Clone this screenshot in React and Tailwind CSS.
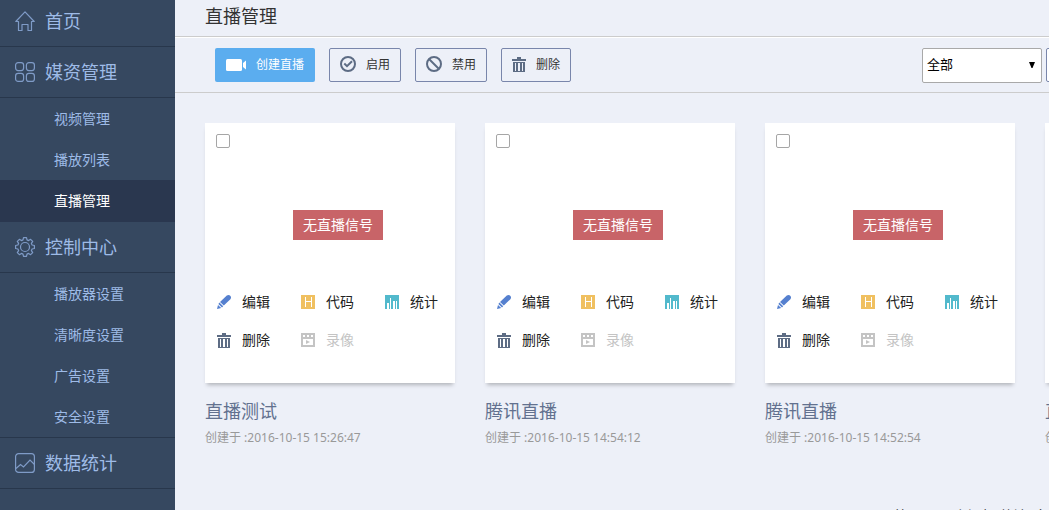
const SANS = "font-['Noto_Sans','Noto_Sans_CJK_SC',sans-serif]";

function HomeIcon() {
  return (
    <svg viewBox="0 0 20 20" className="size-5 shrink-0" fill="none" stroke="currentColor" strokeWidth="1.2" aria-hidden="true">
      <path d="M.8 10.500 10 .8l9.200 9.700H16.500v9h-3.500v-6H7v6H3.500v-9z" strokeLinejoin="round" />
    </svg>
  );
}

function GridIcon() {
  return (
    <svg viewBox="0 0 20 20" className="size-5 shrink-0" fill="none" stroke="currentColor" strokeWidth="1.2" aria-hidden="true">
      <rect x=".6" y=".6" width="8" height="8" rx="2.500" />
      <rect x="11.400" y=".6" width="8" height="8" rx="2.500" />
      <rect x=".6" y="11.400" width="8" height="8" rx="2.500" />
      <rect x="11.400" y="11.400" width="8" height="8" rx="2.500" />
    </svg>
  );
}

function GearIcon() {
  return (
    <svg viewBox="0 0 20 20" className="size-5 shrink-0" fill="none" stroke="currentColor" strokeWidth="1.2" strokeLinejoin="round" aria-hidden="true">
      <path d="M8.500.6h3l.5 2.300 1.600.7 2-1.300 2.100 2.100-1.300 2 .7 1.600 2.300.5v3l-2.300.5-.7 1.600 1.300 2-2.100 2.100-2-1.300-1.600.7-.5 2.300h-3L8 17.100l-1.600-.7-2 1.300-2.100-2.100 1.300-2L2.900 12 .6 11.500v-3L2.900 8l.7-1.600-1.300-2 2.100-2.100 2 1.300L8 2.900z" />
      <circle cx="10" cy="10" r="4.500" />
    </svg>
  );
}

function TrendIcon() {
  return (
    <svg viewBox="0 0 20 20" className="size-5 shrink-0" fill="none" stroke="currentColor" strokeWidth="1.2" aria-hidden="true">
      <rect x=".6" y=".6" width="18.800" height="18.800" rx="3" />
      <path d="m1 15.500 4.500-4 3 2.500 6.500-7 4.500 4.500" />
    </svg>
  );
}

function CameraIcon() {
  return (
    <svg viewBox="0 0 20 12" className="h-3 w-5 shrink-0" fill="currentColor" aria-hidden="true">
      <rect width="16" height="12" rx="1.500" />
      <path d="M17 4 20 1.500v9L17 8z" />
    </svg>
  );
}

function CheckIcon() {
  return (
    <svg viewBox="0 0 16 16" className="size-4 shrink-0" fill="none" stroke="currentColor" strokeWidth="2" aria-hidden="true">
      <circle cx="8" cy="8" r="7" />
      <path d="m4.300 7.500 2.700 2.700 5-5" />
    </svg>
  );
}

function BanIcon() {
  return (
    <svg viewBox="0 0 16 16" className="size-4 shrink-0" fill="none" stroke="currentColor" strokeWidth="2" aria-hidden="true">
      <circle cx="8" cy="8" r="7" />
      <path d="m3 3 10 10" />
    </svg>
  );
}

function TrashIcon() {
  return (
    <svg viewBox="0 0 14 15" className="h-[15px] w-3.5 shrink-0 text-[#5d6c84]" fill="currentColor" aria-hidden="true">
      <path fillRule="evenodd" d="M5 0h4v2h5v2H0V2h5zM1 5h12v10H1zM3 6v8h1V6zM6 6v8h2V6zM10 6v8h1V6z" />
    </svg>
  );
}

function PencilIcon() {
  return (
    <svg viewBox="0 0 14 14" className="size-3.5 shrink-0 text-[#5580cf]" fill="currentColor" aria-hidden="true">
      <path d="M9.800.6Q11-.2 12.500.2 14.200 1 14 3L13.400 4.200 6.800 10.600 3 7zM2.400 7.600 6.200 11.200 5 12.400 1.400 9zM1 10 4.200 13 0 14z" />
    </svg>
  );
}

function CodeIcon() {
  return (
    <svg viewBox="0 0 14 14" className="size-3.5 shrink-0" aria-hidden="true">
      <path fill="#f0c060" d="M0 0h14v14H0z" />
      <path fill="none" stroke="#fff" d="M4.500 2v10M10.500 2v10M4.500 6.500h6" />
    </svg>
  );
}

function StatsIcon() {
  return (
    <svg viewBox="0 0 14 14" className="size-3.5 shrink-0" aria-hidden="true">
      <path fill="#52b9cc" d="M0 0h14v14H0z" />
      <path fill="#fff" d="M2 8h2v6H2zM5 3h1v11H5zM8 6h2v8H8zM11 6h1v8h-1z" />
    </svg>
  );
}

function RecordIcon() {
  return (
    <svg viewBox="0 0 14 14" className="size-3.5 shrink-0" fill="#c4c4c4" aria-hidden="true">
      <path fillRule="evenodd" d="M0 0h14v14H0zM2 2v2h2V2zM6 2v2h2V2zM10 2v2h2V2zM2 6v6h10V6z" />
      <path d="M5 7v4l4-2z" />
    </svg>
  );
}

const MENU = [
  { label: "首页", Icon: HomeIcon, items: [] },
  { label: "媒资管理", Icon: GridIcon, items: ["视频管理", "播放列表", "直播管理"] },
  { label: "控制中心", Icon: GearIcon, items: ["播放器设置", "清晰度设置", "广告设置", "安全设置"] },
  { label: "数据统计", Icon: TrendIcon, items: [] },
];

const STREAMS = [
  { id: 1, title: "直播测试", created: "2016-10-15 15:26:47" },
  { id: 2, title: "腾讯直播", created: "2016-10-15 14:54:12" },
  { id: 3, title: "腾讯直播", created: "2016-10-15 14:52:54" },
  { id: 4, title: "直播测试", created: "2016-10-15 14:50:20" },
];

const ACTIONS = [
  { label: "编辑", Icon: PencilIcon },
  { label: "代码", Icon: CodeIcon },
  { label: "统计", Icon: StatsIcon },
  { label: "删除", Icon: TrashIcon },
  { label: "录像", Icon: RecordIcon, disabled: true },
];

function Sidebar() {
  return (
    <nav className="w-[175px] shrink-0 bg-[#364860] text-[#9ebbe7]">
      {MENU.map(({ label, Icon, items }, index) => (
        <div key={label}>
          <a
            href="#"
            className={
              index === 0
                ? "flex h-[47px] items-center gap-2.5 border-b border-[#28374c] pr-2 pl-[15px] pb-1 text-lg"
                : "flex h-[51px] items-center gap-2.5 border-b border-[#28374c] pr-2 pl-[15px] text-lg"
            }
          >
            <span className="text-[#7f9bc7]"><Icon /></span>
            <span>{label}</span>
          </a>
          {items.length > 0 && (
            <ul className={label === "控制中心" ? "border-b border-[#28374c]" : ""}>
              {items.map((item) => (
                <li key={item}>
                  <a
                    href="#"
                    className={
                      item === "直播管理"
                        ? "flex h-[42px] items-center bg-[#2a374f] pl-[54px] text-sm text-white"
                        : "flex h-[41px] items-center pl-[54px] text-sm"
                    }
                  >
                    {item}
                  </a>
                </li>
              ))}
            </ul>
          )}
        </div>
      ))}
    </nav>
  );
}

function ToolButton({ Icon, children }) {
  return (
    <button type="button" className="flex h-[34px] items-center gap-2.5 rounded-xs border border-[#7986ab] px-2.5 text-xs text-[#333]">
      <span className="pb-0.5 text-[#5d6c84]"><Icon /></span>
      {children}
    </button>
  );
}

function Toolbar() {
  return (
    <div className="flex h-14 items-center border-b border-[#ccc] border-t border-t-white pl-10">
      <div className="flex gap-3.5">
        <button type="button" className="flex h-[34px] items-center gap-2.5 rounded-xs bg-[#5badef] px-[11px] text-xs text-white">
          <CameraIcon />
          创建直播
        </button>
        <ToolButton Icon={CheckIcon}>启用</ToolButton>
        <ToolButton Icon={BanIcon}>禁用</ToolButton>
        <ToolButton Icon={TrashIcon}>删除</ToolButton>
      </div>
      <div className="-mr-[37px] ml-auto flex shrink-0 gap-1">
        <div className="relative">
          <select aria-label="状态" className="h-[35px] w-[120px] appearance-none rounded-xs border border-[#a9a9a9] bg-white px-1 text-[13px] text-black">
            <option>全部</option>
          </select>
          <svg viewBox="0 0 6 6" className="pointer-events-none absolute top-3.5 right-[7px] size-1.5" aria-hidden="true">
            <path d="M0 0h6L3.500 6h-1z" />
          </svg>
        </div>
        <input aria-label="搜索" className="h-[34px] w-10 rounded-xs border border-[#7986ab] bg-white" />
      </div>
    </div>
  );
}

function StreamCard({ id, title, created }) {
  return (
    <article className="w-[250px] shrink-0">
      <div className="flex h-[260px] flex-col bg-white shadow-[0_4px_4px_-2px_rgba(0,0,0,0.25)]">
        <div className="flex px-[11px] pt-[11px]">
          <input
            type="checkbox"
            id={`stream-${id}`}
            aria-label={title}
            className="size-3.5 appearance-none rounded-xs border border-[#a6a6a6] bg-white"
          />
        </div>
        <p className="mt-[62px] ml-[88px] flex h-[30px] w-[90px] items-center justify-center bg-[#c86468] text-sm text-white">
          无直播信号
        </p>
        <div className="mt-[43px] grid grid-cols-[84px_84px_82px] pl-3">
          {ACTIONS.map(({ label, Icon, disabled }) => (
            <button
              key={label}
              type="button"
              disabled={disabled}
              className="flex h-[38px] items-center gap-[11px] text-sm text-[#222] disabled:text-[#c4c4c4]"
            >
              <Icon />
              {label}
            </button>
          ))}
        </div>
      </div>
      <h2 className="mt-4 text-lg leading-6 text-[#62718f]">{title}</h2>
      <p className="mt-[7px] text-xs leading-4 whitespace-nowrap text-[#999]">创建于 :{created}</p>
    </article>
  );
}

export default function App() {
  return (
    <div className={`flex h-screen overflow-hidden bg-[#edf0f8] ${SANS}`}>
      <Sidebar />
      <main className="min-w-0 flex-1 overflow-hidden">
        <h1 className="flex h-[37px] items-center border-b border-[#ccc] pb-1 pl-[30px] text-lg text-[#333]">直播管理</h1>
        <Toolbar />
        <section className="flex gap-[30px] pt-[30px] pl-[30px]">
          {STREAMS.map((stream) => (
            <StreamCard key={stream.id} {...stream} />
          ))}
        </section>
        <footer className="mt-[60px] flex justify-end gap-1 text-sm leading-5 whitespace-nowrap text-[#333]">
          <span>第 1 页</span>
          <span>4 个视频</span>
          <span>共计4条</span>
        </footer>
      </main>
    </div>
  );
}
